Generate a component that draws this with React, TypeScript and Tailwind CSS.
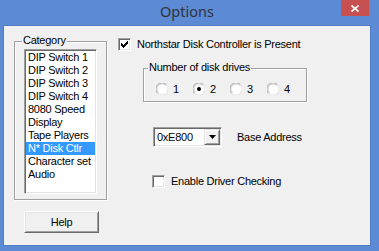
import React from "react";

const font = { fontFamily: '"Liberation Sans", Arial, sans-serif' };

const categories = [
    "DIP Switch 1",
    "DIP Switch 2",
    "DIP Switch 3",
    "DIP Switch 4",
    "8080 Speed",
    "Display",
    "Tape Players",
    "N* Disk Ctlr",
    "Character set",
    "Audio",
];

const CheckBox = ({ checked }: { checked?: boolean }): JSX.Element => (
    <div className="w-[13px] h-[13px] shrink-0 border border-t-[#a0a0a0] border-l-[#a0a0a0] border-r-white border-b-white">
        <div className="w-[11px] h-[11px] bg-white shadow-[inset_1px_1px_0_#696969,inset_-1px_-1px_0_#e3e3e3] flex items-center justify-center">
            {checked && (
                <svg width="7" height="7" viewBox="0 0 7 7" shapeRendering="crispEdges">
                    <path d="M6 0h1v3h-1zM5 1h1v3h-1zM4 2h1v3h-1zM3 3h1v3h-1zM2 4h1v3h-1zM1 3h1v3h-1zM0 2h1v3h-1z" fill="#000" />
                </svg>
            )}
        </div>
    </div>
);

const Radio = ({ checked }: { checked?: boolean }): JSX.Element => (
    <svg width="12" height="12" viewBox="0 0 12 12" className="shrink-0">
        <circle cx="6" cy="6" r="5.5" fill="#fff" />
        <path d="M1.6 10.4A5.5 5.5 0 0 1 10.4 1.6" fill="none" stroke="#a0a0a0" strokeWidth="1" />
        <path d="M10.4 1.6A5.5 5.5 0 0 1 1.6 10.4" fill="none" stroke="#e3e3e3" strokeWidth="1" />
        <path d="M2.5 9.5A4.5 4.5 0 0 1 9.5 2.5" fill="none" stroke="#d0d0d0" strokeWidth="1" />
        {checked && <circle cx="6" cy="6" r="2" fill="#000" />}
    </svg>
);

const GroupBox = ({
    label,
    className,
    labelClass,
    children,
}: {
    label: string;
    className: string;
    labelClass: string;
    children: React.ReactNode;
}): JSX.Element => (
    <div
        className={
            "relative border border-[#a0a0a0] shadow-[inset_1px_1px_0_#fff,1px_1px_0_#fff] " + className
        }
    >
        <span className={"absolute -top-[8px] px-[1px] bg-[#f0f0f0] leading-[13px] " + labelClass}>{label}</span>
        {children}
    </div>
);

const App = (): JSX.Element => {
    return (
        <div className="w-[379px] h-[251px] bg-[#5c8ad4] flex flex-col text-[11px] tracking-[-0.25px] text-black" style={font}>
            <div className="relative h-[25px] flex justify-center pl-[3px] pr-[8px]">
                <span
                    className="mt-[1px] text-[14.5px] tracking-normal text-[#30333d] leading-[20px]"
                    style={{ fontFamily: '"Noto Sans", "Open Sans", sans-serif' }}
                >
                    Options
                </span>
                <div className="absolute top-0 right-[10px] w-[28px] h-[16px] bg-[#c75050] flex items-center justify-center">
                    <svg width="8" height="7" viewBox="0 0 8 7">
                        <path d="M0.5 0.5L7.5 6.5M7.5 0.5L0.5 6.5" stroke="#fff" strokeWidth="1.6" />
                    </svg>
                </div>
            </div>

            <div className="ml-[3px] w-[368px] h-[221px] bg-[#f0f0f0] border border-[#4f7bc4] flex items-start">
                {/* left column */}
                <div className="ml-[10px] mt-[15px] w-[93px] flex flex-col">
                    <GroupBox label="Category" labelClass="left-[7px]" className="w-[93px] h-[159px] pt-[7px] pl-[9px]">
                        <div className="w-[73px] h-[145px] border border-t-[#a0a0a0] border-l-[#a0a0a0] border-r-white border-b-white">
                            <div className="w-full h-full bg-white p-[1px] shadow-[inset_1px_1px_0_#696969,inset_-1px_-1px_0_#e3e3e3]">
                                {categories.map((c, i) => (
                                    <div
                                        key={c}
                                        className={
                                            i === 7
                                                ? "h-[13px] leading-[13px] pl-[2px] bg-[#3399ff] text-white whitespace-nowrap"
                                                : "h-[13px] leading-[13px] pl-[2px] whitespace-nowrap"
                                        }
                                    >
                                        {c}
                                    </div>
                                ))}
                            </div>
                        </div>
                    </GroupBox>
                    <div className="mt-[11px] ml-[10px] w-[75px] h-[22px] border border-t-white border-l-white border-r-[#696969] border-b-[#696969]">
                        <div className="w-full h-full flex items-center justify-center shadow-[inset_1px_1px_0_#e3e3e3,inset_-1px_-1px_0_#a0a0a0]">
                            Help
                        </div>
                    </div>
                </div>

                {/* right column */}
                <div className="ml-[11px] mt-[12px] flex flex-col items-start">
                    <div className="flex items-center gap-[6px]">
                        <CheckBox checked />
                        <span className="leading-[13px]">Northstar Disk Controller is Present</span>
                    </div>

                    <GroupBox
                        label="Number of disk drives"
                        labelClass="left-[4px]"
                        className="ml-[25px] mt-[17px] w-[164px] h-[34px] pt-[14px] pl-[12px]"
                    >
                        <div className="flex">
                            {["1", "2", "3", "4"].map((n) => (
                                <div key={n} className="w-[37px] flex items-center gap-[5px]">
                                    <Radio checked={n === "2"} />
                                    <span className="leading-[12px]">{n}</span>
                                </div>
                            ))}
                        </div>
                    </GroupBox>

                    <div className="ml-[35px] mt-[25px] flex items-center">
                        <div className="w-[69px] h-[20px] border border-t-[#a0a0a0] border-l-[#a0a0a0] border-r-white border-b-white">
                            <div className="w-full h-full bg-white flex items-center p-[1px] shadow-[inset_1px_1px_0_#696969,inset_-1px_-1px_0_#e3e3e3]">
                                <span className="flex-1 pl-[2px] leading-[13px]">0xE800</span>
                                <div className="w-[16px] h-[16px] border border-t-[#e3e3e3] border-l-[#e3e3e3] border-r-[#696969] border-b-[#696969] bg-[#f0f0f0] flex items-center justify-center shadow-[inset_1px_1px_0_#fff,inset_-1px_-1px_0_#a0a0a0]">
                                    <svg width="7" height="4" viewBox="0 0 7 4">
                                        <path d="M0 0h7L3.5 4z" fill="#000" />
                                    </svg>
                                </div>
                            </div>
                        </div>
                        <span className="ml-[15px] leading-[13px]">Base Address</span>
                    </div>

                    <div className="ml-[34px] mt-[28px] flex items-center gap-[6px]">
                        <CheckBox />
                        <span className="leading-[13px]">Enable Driver Checking</span>
                    </div>
                </div>
            </div>
        </div>
    );
};

export default App;
